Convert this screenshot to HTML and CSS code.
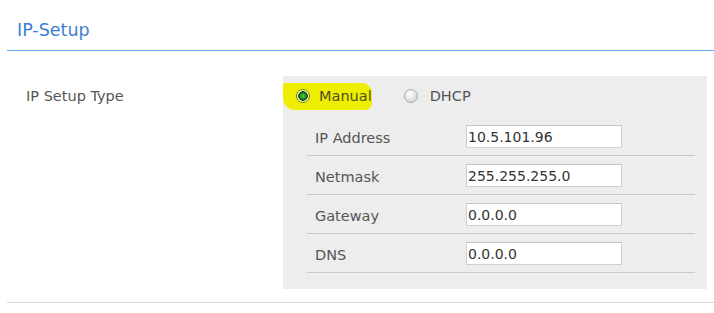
FILE: index.html
```html
<!DOCTYPE html>
<html lang="en">
<head>
  <meta charset="UTF-8">
  <title>IP-Setup</title>
  <link rel="stylesheet" href="styles.css">
</head>
<body>
  <h2 class="title">IP-Setup</h2>

  <div class="setup">
    <div class="setup-label">IP Setup Type</div>
    <div class="panel">
      <div class="mode">
        <label class="opt mark"><span class="radio on"></span>Manual</label>
        <label class="opt"><span class="radio"></span>DHCP</label>
      </div>
      <div class="fields">
        <div class="field"><span>IP Address</span><input type="text" value="10.5.101.96"></div>
        <div class="field"><span>Netmask</span><input type="text" value="255.255.255.0"></div>
        <div class="field"><span>Gateway</span><input type="text" value="0.0.0.0"></div>
        <div class="field"><span>DNS</span><input type="text" value="0.0.0.0"></div>
      </div>
    </div>
  </div>

  <div class="end"></div>
</body>
</html>
```

FILE: styles.css
```css
body {
  margin: 0;
  font-family: "DejaVu Sans", Verdana, sans-serif;
  font-size: 14.5px;
  color: #555;
  background: #fff;
}

.title {
  margin: 0 0 0 7px;
  padding: 19px 0 9px 10px;
  font-size: 17.5px;
  line-height: 22px;
  font-weight: normal;
  color: #3c7ed2;
  border-bottom: 1px solid #62a6ee;
}

.setup {
  display: flex;
  margin-top: 25px;
}

.setup-label {
  flex: 0 0 283px;
  box-sizing: border-box;
  padding: 10px 0 0 26px;
  line-height: 20px;
}

.panel {
  width: 424px;
  background: #ededed;
  padding-bottom: 16px;
}

.mode {
  display: flex;
  align-items: center;
  height: 41px;
  padding-bottom: 1px;
  box-sizing: border-box;
}

.opt {
  display: flex;
  align-items: center;
  gap: 12px;
  line-height: 18px;
  padding: 4px 0;
  color: #555;
}

.mark {
  background: #eeee00;
  padding: 4px 0 5px 13px;
  gap: 9px;
  margin-right: 32px;
  border-radius: 2px 10px 7px 12px;
  color: #4d4d20;
}

.radio {
  width: 12px;
  height: 12px;
  border-radius: 50%;
  border: 1px solid #a9a9a9;
  background: radial-gradient(circle at 40% 35%, #fff 0, #e8e8e8 45%, #c9c9c9 100%);
  box-sizing: content-box;
}

.radio.on {
  border-color: #7a7a3a;
  background: radial-gradient(circle, #5fd23c 0, #1f8a12 3px, #0b4a08 4.5px, #f4f4b8 5px, #e6e6a0 100%);
}

.fields {
  margin: 0 12px 0 24px;
}

.field {
  display: flex;
  align-items: center;
  height: 39px;
  box-sizing: border-box;
  border-bottom: 1px solid #cacaca;
}

.field span {
  flex: 0 0 159px;
  box-sizing: border-box;
  padding: 3px 0 0 8px;
}

.field input {
  width: 156px;
  height: 23px;
  box-sizing: border-box;
  margin: 1px 0 0;
  padding: 1px 1px 0;
  border: 1px solid #d0d0d0;
  border-top-color: #c4c4c4;
  font-family: "DejaVu Sans", Verdana, sans-serif;
  font-size: 14px;
  color: #333;
  background: #fff;
}

.end {
  margin: 13px 0 0 7px;
  border-top: 1px solid #d6d6d6;
}
```
